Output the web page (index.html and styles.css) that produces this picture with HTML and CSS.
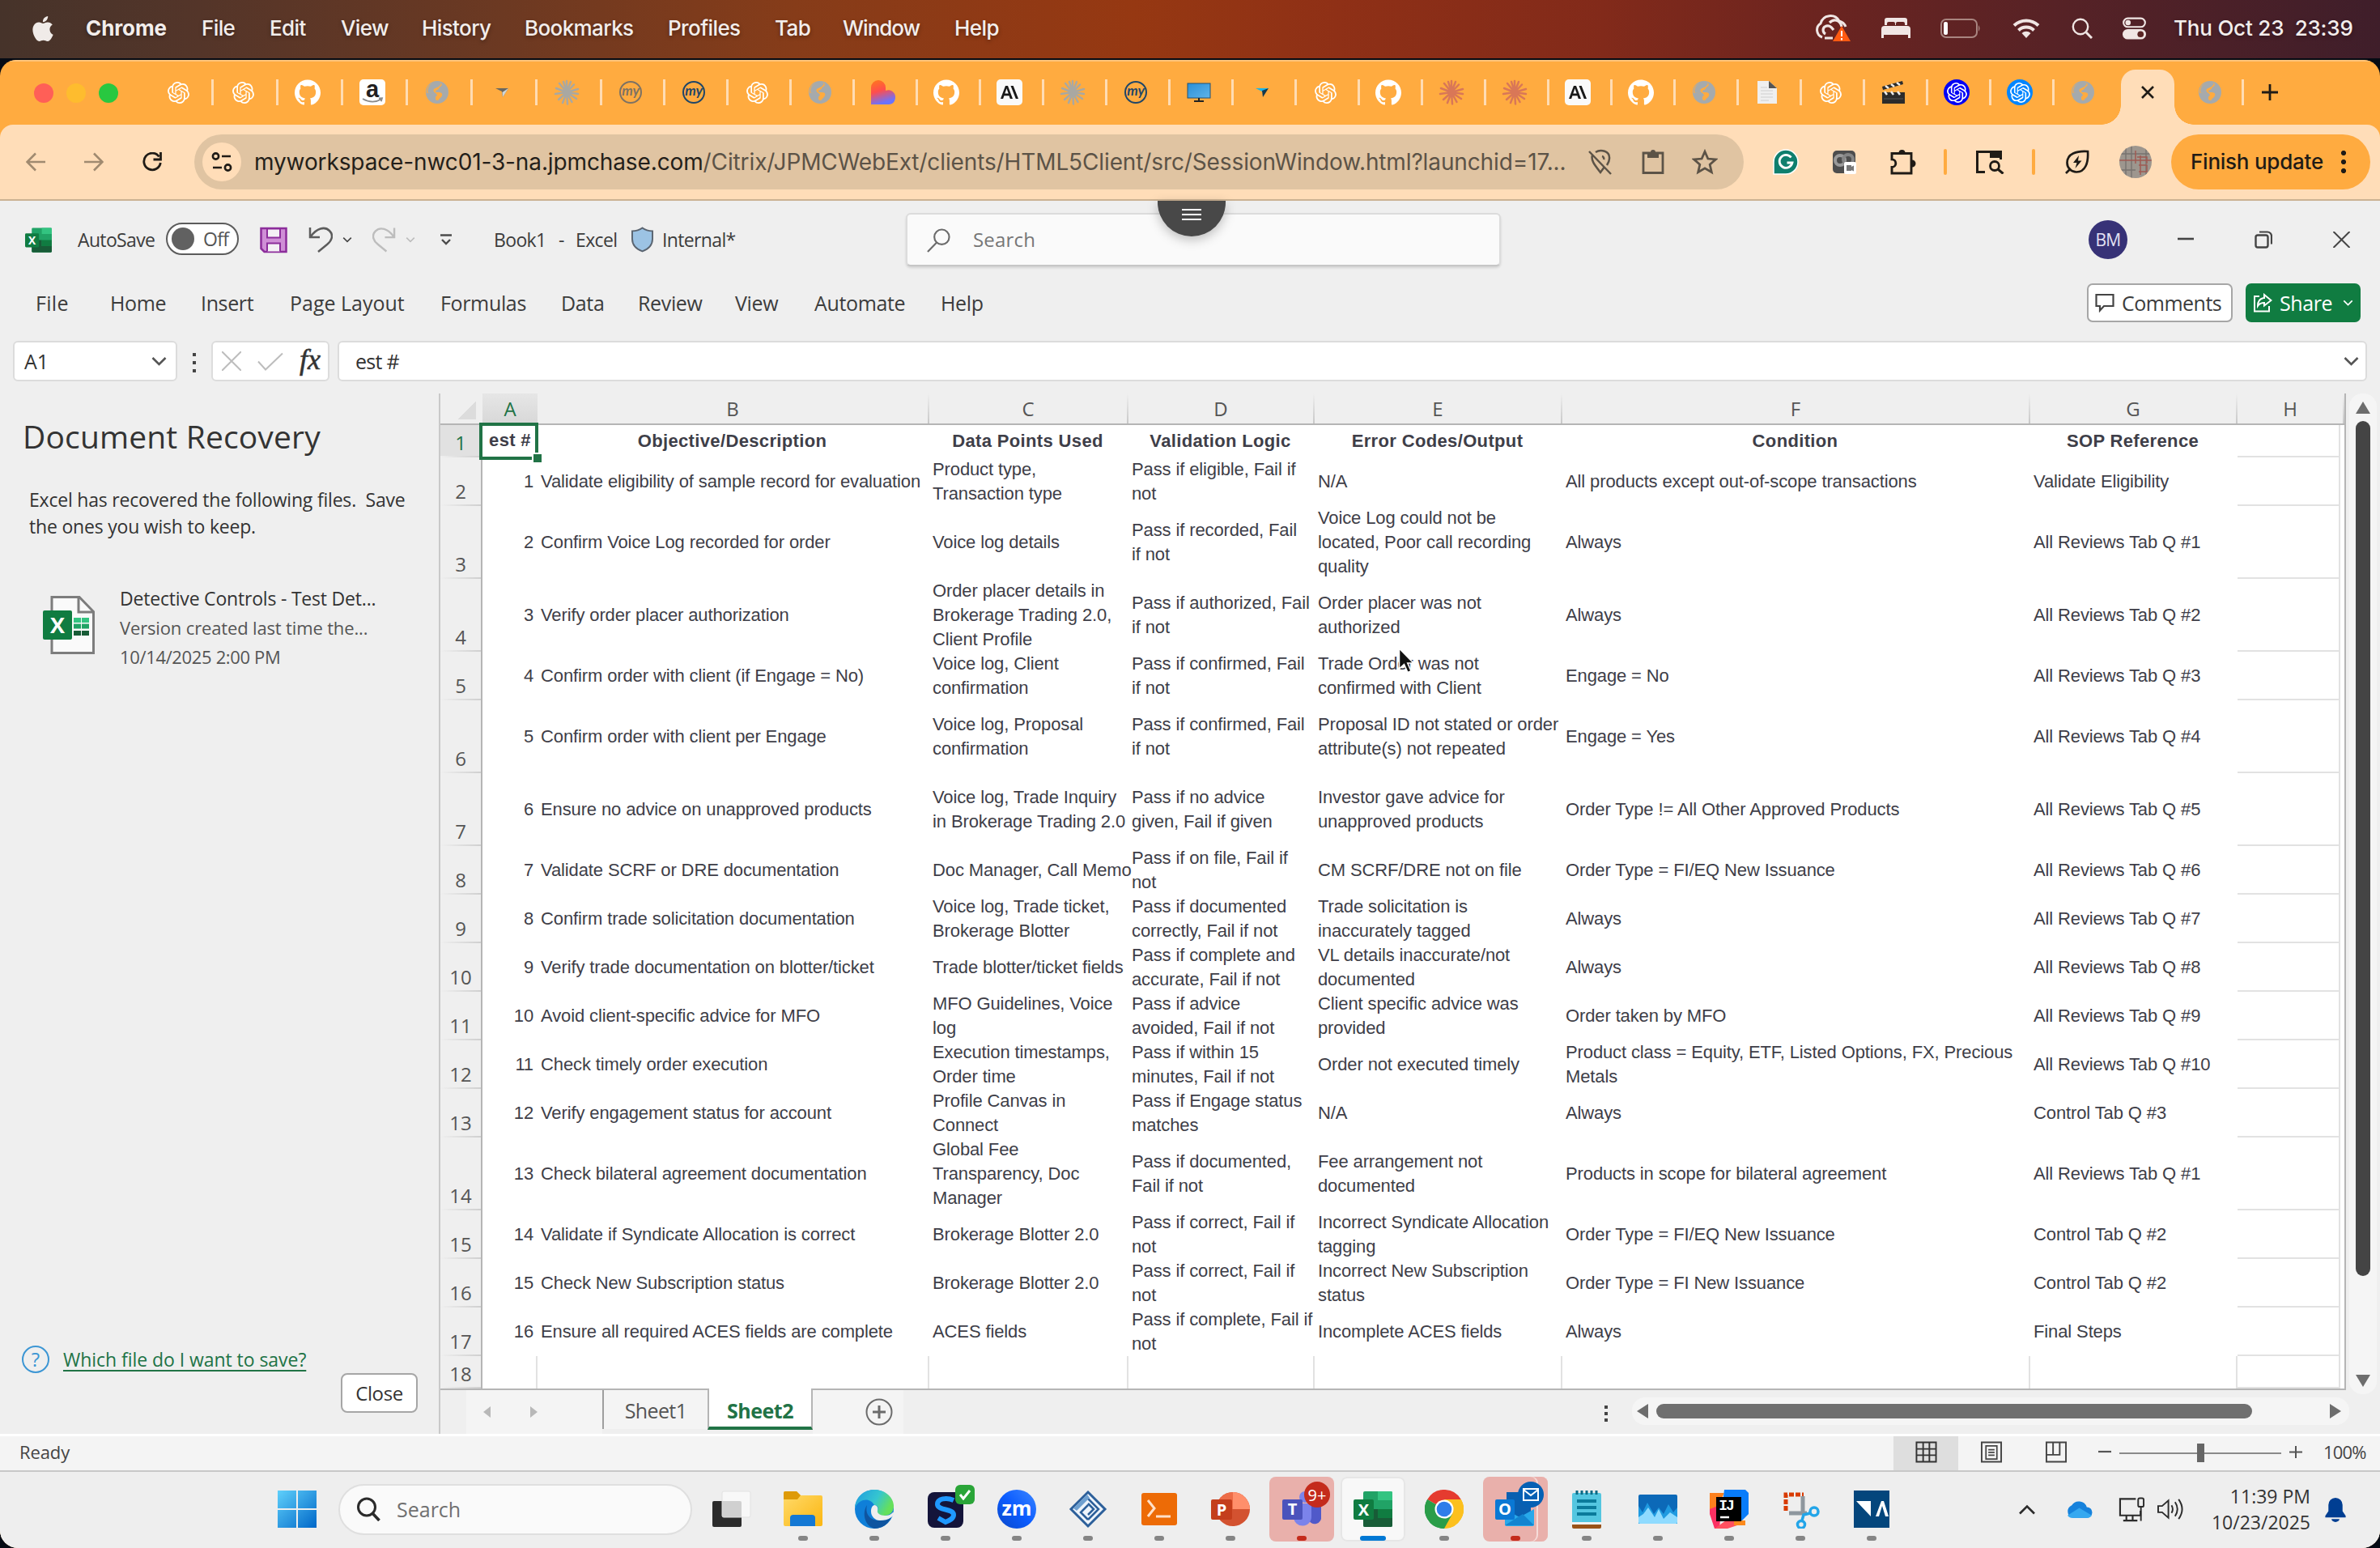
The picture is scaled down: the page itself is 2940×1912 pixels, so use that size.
FILE: index.html
```html
<!DOCTYPE html>
<html lang="en">
<head>
<meta charset="utf-8">
<title>Book1 - Excel</title>
<link rel="stylesheet" href="styles.css">
</head>
<body>
<svg class="defs" width="0" height="0">
  <defs>
    <linearGradient id="gLov" x1="0" y1="0" x2="0.3" y2="1"><stop offset="0" stop-color="#ff7a1a"/><stop offset=".5" stop-color="#ff4d4d"/><stop offset="1" stop-color="#6a73ff"/></linearGradient>
    <linearGradient id="gWin" x1="0" y1="0" x2="1" y2="1"><stop offset="0" stop-color="#5fd0fb"/><stop offset="1" stop-color="#0067c8"/></linearGradient>
    <linearGradient id="gEdge" x1="0" y1="0" x2="1" y2=".4"><stop offset="0" stop-color="#1e9be0"/><stop offset=".6" stop-color="#35c6d0"/><stop offset="1" stop-color="#66e05a"/></linearGradient>
    <linearGradient id="gFold" x1="0" y1="0" x2="1" y2="1"><stop offset="0" stop-color="#ffdc6e"/><stop offset="1" stop-color="#fbb612"/></linearGradient>
    <linearGradient id="gMon" x1="0" y1="0" x2="1" y2="1"><stop offset="0" stop-color="#2b8fd6"/><stop offset="1" stop-color="#5fb4ea"/></linearGradient>
    <linearGradient id="gZoom" x1="1" y1="0" x2="0" y2="1"><stop offset="0" stop-color="#3d87ff"/><stop offset=".5" stop-color="#0b5cff"/><stop offset="1" stop-color="#0a48c8"/></linearGradient>
  </defs>
  <symbol id="openai" viewBox="0 0 24 24"><path d="M22.2819 9.8211a5.9847 5.9847 0 0 0-.5157-4.9108 6.0462 6.0462 0 0 0-6.5098-2.9A6.0651 6.0651 0 0 0 4.9807 4.1818a5.9847 5.9847 0 0 0-3.9977 2.9 6.0462 6.0462 0 0 0 .7427 7.0966 5.98 5.98 0 0 0 .511 4.9107 6.051 6.051 0 0 0 6.5146 2.9001A5.9847 5.9847 0 0 0 13.2599 24a6.0557 6.0557 0 0 0 5.7718-4.2058 5.9894 5.9894 0 0 0 3.9977-2.9001 6.0557 6.0557 0 0 0-.7475-7.0729zm-9.022 12.6081a4.4755 4.4755 0 0 1-2.8764-1.0408l.1419-.0804 4.7783-2.7582a.7948.7948 0 0 0 .3927-.6813v-6.7369l2.02 1.1686a.071.071 0 0 1 .038.052v5.5826a4.504 4.504 0 0 1-4.4945 4.4944zm-9.6607-4.1254a4.4708 4.4708 0 0 1-.5346-3.0137l.142.0852 4.783 2.7582a.7712.7712 0 0 0 .7806 0l5.8428-3.3685v2.3324a.0804.0804 0 0 1-.0332.0615L9.74 19.9502a4.4992 4.4992 0 0 1-6.1408-1.6464zM2.3408 7.8956a4.485 4.485 0 0 1 2.3655-1.9728V11.6a.7664.7664 0 0 0 .3879.6765l5.8144 3.3543-2.0201 1.1685a.0757.0757 0 0 1-.071 0l-4.8303-2.7865A4.504 4.504 0 0 1 2.3408 7.872zm16.5963 3.8558L13.1038 8.364 15.1192 7.2a.0757.0757 0 0 1 .071 0l4.8303 2.7913a4.4944 4.4944 0 0 1-.6765 8.1042v-5.6772a.79.79 0 0 0-.407-.667zm2.0107-3.0231l-.142-.0852-4.7735-2.7818a.7759.7759 0 0 0-.7854 0L9.409 9.2297V6.8974a.0662.0662 0 0 1 .0284-.0615l4.8303-2.7866a4.4992 4.4992 0 0 1 6.6802 4.66zM8.3065 12.863l-2.02-1.1638a.0804.0804 0 0 1-.038-.0567V6.0742a4.4992 4.4992 0 0 1 7.3757-3.4537l-.142.0805L8.704 5.459a.7948.7948 0 0 0-.3927.6813zm1.0976-2.3654l2.602-1.4998 2.6069 1.4998v2.9994l-2.5974 1.4997-2.6067-1.4997Z" fill="currentColor"/></symbol>
  <symbol id="github" viewBox="0 0 24 24"><path fill="#fff" d="M12 .297c-6.63 0-12 5.373-12 12 0 5.303 3.438 9.8 8.205 11.385.6.113.82-.258.82-.577 0-.285-.01-1.04-.015-2.04-3.338.724-4.042-1.61-4.042-1.61C4.422 18.07 3.633 17.7 3.633 17.7c-1.087-.744.084-.729.084-.729 1.205.084 1.838 1.236 1.838 1.236 1.07 1.835 2.809 1.305 3.495.998.108-.776.417-1.305.76-1.605-2.665-.3-5.466-1.332-5.466-5.93 0-1.31.465-2.38 1.235-3.22-.135-.303-.54-1.523.105-3.176 0 0 1.005-.322 3.3 1.23.96-.267 1.98-.399 3-.405 1.02.006 2.04.138 3 .405 2.28-1.552 3.285-1.23 3.285-1.23.645 1.653.24 2.873.12 3.176.765.84 1.23 1.91 1.23 3.22 0 4.61-2.805 5.625-5.475 5.92.42.36.81 1.096.81 2.22 0 1.606-.015 2.896-.015 3.286 0 .315.21.69.825.57C20.565 22.092 24 17.592 24 12.297c0-6.627-5.373-12-12-12"/></symbol>
  <symbol id="globe" viewBox="0 0 32 32"><circle cx="16" cy="16" r="14" fill="#a5aaad"/><path d="M18 4c4 0 5 3 2 5s-1 3-4 4-3 3 1 3 6 1 5 4-3 3-4 5-4 1-4-1 1-3-1-5-7-3-10-2c0-6 2-10 7-12 3-1 5-1 8-1z" fill="#ffab40"/><path d="M20 4.500c-4-2-11-1-14 4-2 3-2 6-1.500 8 3 0 7 1 8 3 2 3 4 1 3-1s-4-2-4-5 5-3 7-5 1-2 2.500-2z" fill="#a5aaad"/></symbol>
  <symbol id="arrow-grey" viewBox="0 0 32 32"><path d="M8 11h16l-7 11-1-7z" fill="#6a675f"/><path d="M24 11l-7 11-.5-6z" fill="#cfd6d8"/></symbol>
  <symbol id="arrow-blue" viewBox="0 0 32 32"><path d="M8 11h16l-6 4-2 0z" fill="#19b5ea"/><path d="M16 14l8-3-7 11z" fill="#12384e"/></symbol>
  <symbol id="burst" viewBox="0 0 32 32"><path d="M16 16V2M16 16l5-13M16 16l9-9.500M16 16l14-4M16 16l14 2M16 16l12 8M16 16l6.500 12M16 16l1 14.500M16 16l-5 13M16 16l-10 9M16 16l-14 2M16 16l-13-5M16 16l-9-11M16 16l-4-13" stroke="currentColor" stroke-width="2.500" stroke-linecap="round"/></symbol>
  <symbol id="lov" viewBox="0 0 32 32"><path d="M1 31V10a9 9 0 0 1 18 0v4a8.500 8.500 0 0 1 12 8c0 5-3 9-8 9z" fill="url(#gLov)"/></symbol>
  <symbol id="ai" viewBox="0 0 32 32"><rect width="32" height="32" rx="5" fill="#fafafa"/><path d="M5 24l6-16h3l6 16h-3.200l-1.300-3.800H9.400L8.100 24zM10.300 17.500h4.400L12.500 11.300z M17.500 8h3.200l6.300 16h-3.200z" fill="#1a1a1a"/></symbol>
  <symbol id="monitor" viewBox="0 0 32 32"><rect x="2" y="5" width="28" height="18" fill="url(#gMon)" stroke="#24506f"/><path d="M16 23v4M10 27h12" stroke="#222" stroke-width="2"/></symbol>
  <symbol id="doc" viewBox="0 0 32 32"><path d="M4 2h14l10 9v19H4z" fill="#efefef"/><path d="M18 2v9h10z" fill="#555"/><path d="M8 10h8M8 14h15M8 18h15M8 22h15M8 26h10" stroke="#cfcfcf"/></symbol>
  <symbol id="clap" viewBox="0 0 32 32"><path d="M2 16h28v14H2z" fill="#2b2b2b"/><path d="M2 9l25-7 1 4L3 13z" fill="#2b2b2b"/><path d="M6 8l4 3M13 6l4 3M20 4l4 3M5 15l3 4M13 15l3 4M21 15l3 4" stroke="#eee" stroke-width="2.500"/><path d="M4 24h24" stroke="#555"/></symbol>
  <symbol id="chev" viewBox="0 0 20 12"><path d="M2 2l8 8 8-8" fill="none" stroke="currentColor" stroke-width="2.600"/></symbol>
</svg>

<header class="menubar">
  <svg class="apple" viewBox="0 0 24 24"><path fill="#f0ebe8" d="M12.152 6.896c-.948 0-2.415-1.078-3.96-1.040-2.040.027-3.910 1.183-4.961 3.014-2.117 3.675-.546 9.103 1.519 12.090 1.013 1.454 2.208 3.090 3.792 3.039 1.520-.065 2.090-.987 3.935-.987 1.831 0 2.350.987 3.960.948 1.637-.026 2.676-1.480 3.676-2.948 1.156-1.688 1.636-3.325 1.662-3.415-.039-.013-3.182-1.221-3.220-4.857-.026-3.040 2.480-4.494 2.597-4.559-1.429-2.090-3.623-2.324-4.390-2.376-2-.156-3.675 1.090-4.610 1.090zM15.530 3.830c.843-1.012 1.400-2.427 1.245-3.830-1.207.052-2.662.805-3.532 1.818-.780.896-1.454 2.338-1.273 3.714 1.338.104 2.715-.688 3.559-1.701"/></svg>
  <nav class="mac-menu">
    <b class="m1">Chrome</b><span class="m2">File</span><span class="m3">Edit</span><span class="m4">View</span><span class="m5">History</span><span class="m6">Bookmarks</span><span class="m7">Profiles</span><span class="m8">Tab</span><span class="m9">Window</span><span>Help</span>
  </nav>
  <div class="mac-status">
    <svg class="cc" viewBox="0 0 44 34"><path d="M9 28a9.500 9.500 0 0 1-2-17A12.500 12.500 0 0 1 30 8a12 12 0 0 1 8 7M12 29h10" fill="none" stroke="#f0e6e4" stroke-width="3"/><path d="M13 24a5.500 5.500 0 0 1-1-9c5-3 8 0 11 4M18 10c5-5 13-4 15 5" fill="none" stroke="#f0e6e4" stroke-width="3.200"/><path d="M33 14l11 19H22z" fill="#ff5a12"/><path d="M33 20v7M33 29v2.500" stroke="#fff" stroke-width="2"/></svg>
    <svg class="bed" viewBox="0 0 36 26"><path d="M4 9V3a3 3 0 0 1 3-3h22a3 3 0 0 1 3 3v6h-3V7a2 2 0 0 0-2-2h-7a2 2 0 0 0-2 2v2h-1V7a2 2 0 0 0-2-2H9a2 2 0 0 0-2 2v2zM0 25V14a4 4 0 0 1 4-4h28a4 4 0 0 1 4 4v11h-3v-4H3v4z" fill="#f0e6e4"/></svg>
    <svg class="batt" viewBox="0 0 50 24"><rect x="1" y="1" width="44" height="22" rx="6" fill="none" stroke="#a98580" stroke-width="2"/><rect x="4" y="4" width="5" height="16" rx="2" fill="#fff"/><path d="M47 8q3 4 0 8z" fill="#a98580"/></svg>
    <svg class="wifi" viewBox="0 0 34 26"><path d="M2 9.500a21.500 21.500 0 0 1 30 0M7.500 15.500a13.500 13.500 0 0 1 19 0" fill="none" stroke="#f0e6e4" stroke-width="4"/><path d="M17 25l-5.500-6a8 8 0 0 1 11 0z" fill="#f0e6e4"/></svg>
    <svg class="mag" viewBox="0 0 26 26"><circle cx="11" cy="11" r="9.200" fill="none" stroke="#f0e6e4" stroke-width="2.400"/><path d="M18 18l7 7" stroke="#f0e6e4" stroke-width="3"/></svg>
    <svg class="ctl" viewBox="0 0 30 28"><rect x="1.200" y="1.200" width="27.600" height="11" rx="5.500" fill="none" stroke="#f0e6e4" stroke-width="2.200"/><circle cx="7" cy="6.700" r="3.400" fill="#f0e6e4"/><rect x="0" y="15" width="30" height="13" rx="6.500" fill="#f0e6e4"/><circle cx="23" cy="21.500" r="4" fill="#5a2424"/></svg>
    <span class="clock">Thu Oct 23&nbsp; 23:39</span>
  </div>
</header>

<div class="browser">
  <div class="tabstrip">
    <div class="lights"><i class="red"></i><i class="yel"></i><i class="grn"></i></div>
    <div class="tab w"><svg class="oa"><use href="#openai"/></svg></div>
    <div class="tab w"><svg class="oa"><use href="#openai"/></svg></div>
    <div class="tab w"><svg><use href="#github"/></svg></div>
    <div class="tab w"><svg viewBox="0 0 32 32"><rect width="32" height="32" rx="5" fill="#fff"/><text class="amz" x="16" y="22" text-anchor="middle">a</text><path d="M4 24q12 7 23 .5M24 23.500l4-.3-1.200 4" fill="none" stroke="#8a8a8a" stroke-width="1.800"/></svg></div>
    <div class="tab w"><svg><use href="#globe"/></svg></div>
    <div class="tab w"><svg><use href="#arrow-grey"/></svg></div>
    <div class="tab w"><svg class="grey"><use href="#burst"/></svg></div>
    <div class="tab"><svg class="my mygrey" viewBox="0 0 32 32"><circle cx="16" cy="16" r="13"/><text x="16" y="20" text-anchor="middle">my</text></svg></div>
    <div class="tab"><svg class="my myblue" viewBox="0 0 32 32"><circle cx="16" cy="16" r="13"/><text x="16" y="20" text-anchor="middle">my</text></svg></div>
    <div class="tab"><svg class="oa"><use href="#openai"/></svg></div>
    <div class="tab"><svg><use href="#globe"/></svg></div>
    <div class="tab"><svg><use href="#lov"/></svg></div>
    <div class="tab"><svg><use href="#github"/></svg></div>
    <div class="tab"><svg><use href="#ai"/></svg></div>
    <div class="tab"><svg class="grey"><use href="#burst"/></svg></div>
    <div class="tab"><svg class="my myblue" viewBox="0 0 32 32"><circle cx="16" cy="16" r="13"/><text x="16" y="20" text-anchor="middle">my</text></svg></div>
    <div class="tab"><svg><use href="#monitor"/></svg></div>
    <div class="tab"><svg><use href="#arrow-blue"/></svg></div>
    <div class="tab"><svg class="oa"><use href="#openai"/></svg></div>
    <div class="tab"><svg><use href="#github"/></svg></div>
    <div class="tab"><svg class="clay"><use href="#burst"/></svg></div>
    <div class="tab"><svg class="clay"><use href="#burst"/></svg></div>
    <div class="tab"><svg><use href="#ai"/></svg></div>
    <div class="tab"><svg><use href="#github"/></svg></div>
    <div class="tab"><svg><use href="#globe"/></svg></div>
    <div class="tab"><svg><use href="#doc"/></svg></div>
    <div class="tab"><svg class="oa"><use href="#openai"/></svg></div>
    <div class="tab"><svg><use href="#clap"/></svg></div>
    <div class="tab"><span class="disc navy"><svg><use href="#openai"/></svg></span></div>
    <div class="tab"><span class="disc sky"><svg><use href="#openai"/></svg></span></div>
    <div class="tab nosep"><svg><use href="#globe"/></svg></div>
    <div class="tab-active"><svg viewBox="0 0 16 16"><path d="M1 1l14 14M15 1L1 15" stroke="#1f1b16" stroke-width="2.600"/></svg></div>
    <div class="tab last"><svg><use href="#globe"/></svg></div>
    <svg class="plus" viewBox="0 0 20 20"><path d="M10 0v20M0 10h20" stroke="#1f1b16" stroke-width="2.800"/></svg>
  </div>

  <div class="toolbar">
    <svg class="t-back" viewBox="0 0 24 24"><path d="M24 12H2M12 1.500L1.500 12 12 22.500" fill="none" stroke="#a08a70" stroke-width="2.600"/></svg>
    <svg class="t-fwd" viewBox="0 0 24 24"><path d="M0 12h22M12 1.500L22.500 12 12 22.500" fill="none" stroke="#a08a70" stroke-width="2.600"/></svg>
    <svg class="t-reload" viewBox="0 0 24 24"><path d="M20.500 5.500A10.300 10.300 0 1 0 22.300 13" fill="none" stroke="#1f1b16" stroke-width="2.800"/><path d="M22.500 0v9h-9" fill="none" stroke="#1f1b16" stroke-width="2.800"/></svg>
    <div class="omnibox">
      <span class="site"><svg viewBox="0 0 26 24"><g fill="none" stroke="#1f1b16" stroke-width="2.600"><circle cx="5.500" cy="5" r="3.600"/><path d="M13 5h11M2 19h11"/><circle cx="20.500" cy="19" r="3.600"/></g></svg></span>
      <span class="url"><span class="host">myworkspace-nwc01-3-na.jpmchase.com</span><span class="path">/Citrix/JPMCWebExt/clients/HTML5Client/src/SessionWindow.html?launchid=17...</span></span>
      <svg class="o-loc" viewBox="0 0 30 32"><g fill="none" stroke="#5c5347" stroke-width="2.500"><path d="M1 3l27 28M5 8c-2 6 3 12 10 21l5-7M9 4c6-4 18-2 17 8 0 3-1 5-3 8M17 9a3 3 0 0 1 2 4"/></g></svg>
      <svg class="o-clip" viewBox="0 0 30 32"><path d="M3 5h24v24.500H3z" fill="none" stroke="#5c5347" stroke-width="2.800"/><path d="M8 4h4a3 3 0 0 1 6 0h4v7H8z" fill="#5c5347"/></svg>
      <svg class="o-star" viewBox="0 0 30 30"><path d="M15 3l3.600 8.300 9 .8-6.800 6 2 8.800L15 22.300 7.200 26.900l2-8.800-6.800-6 9-.8z" fill="none" stroke="#5c5347" stroke-width="2.600"/></svg>
    </div>
    <svg class="e-gram" viewBox="0 0 32 32"><path d="M1 31V16A15 15 0 1 1 16 31z" fill="#0f7f6e" stroke="#fff" stroke-width="1.500"/><path d="M22.500 10.500A8 8 0 1 0 24 17h-6.500" fill="none" stroke="#fff" stroke-width="2.800"/></svg>
    <svg class="e-cam" viewBox="0 0 30 30"><rect x="1" y="1" width="28" height="28" rx="5" fill="#4d4d4d"/><circle cx="10" cy="13" r="6" fill="none" stroke="#9a9a9a" stroke-width="4"/><circle cx="20" cy="12" r="6" fill="none" stroke="#858585" stroke-width="4"/><rect x="15" y="15" width="15" height="15" rx="2" fill="#fff"/><path d="M18 19h6v2l3-1.500v7L24 25v1h-6z" fill="#777"/></svg>
    <svg class="e-puz" viewBox="0 0 32 32"><path d="M2 5.500h24V30H2v-7.500a4.800 4.800 0 0 0 0-9.600z" fill="none" stroke="#1f1b16" stroke-width="2.900"/><path d="M10.500 5a4 4 0 0 1 8 0zM27 13.500a4 4 0 0 1 0 9z" fill="#1f1b16"/></svg>
    <i class="vsep s1"></i>
    <svg class="e-srch" viewBox="0 0 36 30"><path d="M12 27.500H2.500v-25h29V12" fill="none" stroke="#1f1b16" stroke-width="3"/><path d="M18 2h14v8H18z" fill="#1f1b16"/><circle cx="24" cy="20" r="5.500" fill="none" stroke="#1f1b16" stroke-width="2.800"/><path d="M28 24l6.500 5.500" stroke="#1f1b16" stroke-width="3"/></svg>
    <i class="vsep s2"></i>
    <svg class="e-leaf" viewBox="0 0 30 30"><path d="M28 2C14 1 2.500 5 2.500 16a11.500 11.500 0 0 0 11.500 11.500C25 27.500 29 16 28 2zM1 29l6-6" fill="none" stroke="#1f1b16" stroke-width="2.700"/><path d="M17 7l-7 9h4.500l-2 7 8-9.500H16z" fill="#1f1b16"/></svg>
    <span class="avatar"><svg viewBox="0 0 40 40"><rect width="40" height="40" fill="#9d968e"/><path d="M8 0v40M33 0v40M0 30h20M0 10h40M15 0v40" stroke="#77736f" stroke-width="1.400"/><path d="M0 18h40M20 6v16M26 12v24M24 24h10v8H24M22 14h12v8" stroke="#a05a52" stroke-width="1.500" fill="none"/></svg></span>
    <span class="finish"><span>Finish update</span><i></i></span>
  </div>

  <main class="session">
    <button class="citrix" aria-label="Toolbar"><i></i><i></i><i></i></button>

    <div class="xl-title">
      <svg class="x-logo" viewBox="0 0 48 44"><rect x="12" y="0" width="36" height="44" rx="2" fill="#21a366"/><path d="M30 0h16a2 2 0 0 1 2 2v9H30z" fill="#33c481"/><path d="M12 22h18v11H12z" fill="#185c37"/><path d="M30 22h18v11H30z" fill="#107c41"/><path d="M12 33h36v9a2 2 0 0 1-2 2H14a2 2 0 0 1-2-2z" fill="#185c37"/><rect x="0" y="10" width="25" height="25" rx="2" fill="#107c41"/><text class="lt" x="12.500" y="30" text-anchor="middle">X</text></svg>
      <span class="x-auto">AutoSave</span>
      <span class="toggle"><i></i>Off</span>
      <svg class="x-save" viewBox="0 0 34 32"><path d="M1.500 1.500h31v29h-27l-4-4z" fill="#cf8fd6" stroke="#8c2d9b" stroke-width="2.500"/><path d="M9 2h16v11H9z" fill="#f4f0f5" stroke="#8c2d9b" stroke-width="2"/><path d="M9 30V20h16v10" fill="#f4f0f5" stroke="#8c2d9b" stroke-width="2"/></svg>
      <svg class="x-undo" viewBox="0 0 30 32"><path d="M2 1v12h12M3 12C10 2 20-1 26 5s2 13-3 17l-11 9" fill="none" stroke="#5c5c5c" stroke-width="2.500"/></svg>
      <svg class="x-c1"><use href="#chev"/></svg>
      <svg class="x-redo" viewBox="0 0 30 32"><path d="M28 1v12H16M27 12C20 2 10-1 4 5s-2 13 3 17l11 9" fill="none" stroke="#bdbdbd" stroke-width="2.500"/></svg>
      <svg class="x-c2"><use href="#chev"/></svg>
      <svg class="x-cust" viewBox="0 0 16 14"><path d="M1 1.500h14M3 7l5 5 5-5" fill="none" stroke="#4c4c4c" stroke-width="2.400"/></svg>
      <span class="x-doc"><span>Book1</span><span>-</span><span>Excel</span></span>
      <svg class="x-shield" viewBox="0 0 28 32"><path d="M14 1c4 3 8 4 13 4v10c0 8-5 13-13 16C6 28 1 23 1 15V5c5 0 9-1 13-4z" fill="#9cc3e4" stroke="#5a6470" stroke-width="2"/></svg>
      <span class="x-int">Internal*</span>
      <div class="x-search"><svg viewBox="0 0 30 32"><circle cx="19" cy="12" r="9.500" fill="none" stroke="#6b6b6b" stroke-width="2.200"/><path d="M12.500 19L1 31" stroke="#6b6b6b" stroke-width="2.200"/></svg><span>Search</span></div>
      <span class="x-bm">BM</span>
      <svg class="x-min" viewBox="0 0 20 20"><path d="M0 9h20" stroke="#444" stroke-width="2.600"/></svg>
      <svg class="x-res" viewBox="0 0 22 22"><rect x="1.500" y="5.500" width="15" height="15" rx="2.500" fill="none" stroke="#444" stroke-width="2.400"/><path d="M6 1.500h10a5 5 0 0 1 5 5v10" fill="none" stroke="#444" stroke-width="2.200"/></svg>
      <svg class="x-cls" viewBox="0 0 20 20"><path d="M0 0l20 20M20 0L0 20" stroke="#444" stroke-width="2"/></svg>
    </div>

    <div class="ribbon">
      <span class="r1">File</span><span class="r2">Home</span><span class="r3">Insert</span><span class="r4">Page Layout</span><span class="r5">Formulas</span><span class="r6">Data</span><span class="r7">Review</span><span class="r8">View</span><span class="r9">Automate</span><span class="r10">Help</span>
      <span class="btn-comments"><svg viewBox="0 0 24 24"><path d="M1.500 2h21v14H11l-5 5.500V16H1.500z" fill="none" stroke="#444" stroke-width="2.200"/></svg><span>Comments</span></span>
      <span class="btn-share"><svg viewBox="0 0 24 24"><path d="M8 4H2v18.500h18V16" fill="none" stroke="#fff" stroke-width="2"/><path d="M14 2l8.500 7L14 15.500V12c-4 0-6 1-8 4 0-6 3-9.500 8-10z" fill="none" stroke="#fff" stroke-width="2"/></svg><span>Share</span><svg class="sc"><use href="#chev"/></svg></span>
    </div>

    <div class="formula">
      <span class="namebox"><span>A1</span><svg><use href="#chev"/></svg></span>
      <span class="vdots"><i></i><i></i><i></i></span>
      <span class="fxbox"><svg class="fx-x" viewBox="0 0 24 24"><path d="M0 0l24 24M24 0L0 24" stroke="#bdbdbd" stroke-width="2"/></svg><svg class="fx-v" viewBox="0 0 32 22"><path d="M1 11l9 10L31 1" fill="none" stroke="#bdbdbd" stroke-width="2"/></svg><em>fx</em></span>
      <span class="fbar"><span>est #</span><svg><use href="#chev"/></svg></span>
    </div>

    <div class="work">
      <aside class="pane">
        <h1>Document Recovery</h1>
        <p>Excel has recovered the following files.&nbsp; Save<br>the ones you wish to keep.</p>
        <div class="rec">
          <svg viewBox="0 0 64 72"><path d="M11 1.500h34l17.500 18V70.500H11z" fill="#fafafa" stroke="#7d7d7d" stroke-width="3"/><path d="M44 2v18h18" fill="none" stroke="#7d7d7d" stroke-width="3"/><rect x="0" y="18" width="36" height="36" rx="2" fill="#107c41"/><path d="M38 27h9v6h-9zM48 27h9v6h-9z" fill="#33c481"/><path d="M38 34.500h9v6h-9zM48 34.500h9v6h-9z" fill="#21a366"/><path d="M38 43h9v6h-9zM48 43h9v6h-9z" fill="#185c37"/><text x="18" y="46" text-anchor="middle" font-family="Open Sans, sans-serif" font-weight="700" font-size="27" fill="#fff">X</text></svg>
          <div><span class="d1">Detective Controls - Test Det...</span><span class="d2">Version created last time the...</span><span class="d3">10/14/2025 2:00 PM</span></div>
        </div>
        <div class="which"><span class="q">?</span><a>Which file do I want to save?</a></div>
        <span class="close">Close</span>
      </aside>

      <section class="book">
        <div class="gridwrap">
          <div class="sheet">
            <div class="row head"><span class="corner"></span><span class="sel">A</span><span>B</span><span>C</span><span>D</span><span>E</span><span>F</span><span>G</span><span>H</span></div>
            <div class="row h40 titles"><b class="n on">1</b><span class="a1">est #</span><span>Objective/Description</span><span>Data Points Used</span><span>Validation Logic</span><span>Error Codes/Output</span><span>Condition</span><span>SOP Reference</span><i></i></div>
            <div class="row h60"><b class="n">2</b><span>1</span><span>Validate eligibility of sample record for evaluation</span><span>Product type,<br>Transaction type</span><span>Pass if eligible, Fail if<br>not</span><span>N/A</span><span>All products except out-of-scope transactions</span><span>Validate Eligibility</span><i></i></div>
            <div class="row h90"><b class="n">3</b><span>2</span><span>Confirm Voice Log recorded for order</span><span>Voice log details</span><span>Pass if recorded, Fail<br>if not</span><span>Voice Log could not be<br>located, Poor call recording<br>quality</span><span>Always</span><span>All Reviews Tab Q #1</span><i></i></div>
            <div class="row h90"><b class="n">4</b><span>3</span><span>Verify order placer authorization</span><span>Order placer details in<br>Brokerage Trading 2.0,<br>Client Profile</span><span>Pass if authorized, Fail<br>if not</span><span>Order placer was not<br>authorized</span><span>Always</span><span>All Reviews Tab Q #2</span><i></i></div>
            <div class="row h60"><b class="n">5</b><span>4</span><span>Confirm order with client (if Engage = No)</span><span>Voice log, Client<br>confirmation</span><span>Pass if confirmed, Fail<br>if not</span><span>Trade Order was not<br>confirmed with Client</span><span>Engage = No</span><span>All Reviews Tab Q #3</span><i></i></div>
            <div class="row h90"><b class="n">6</b><span>5</span><span>Confirm order with client per Engage</span><span>Voice log, Proposal<br>confirmation</span><span>Pass if confirmed, Fail<br>if not</span><span>Proposal ID not stated or order<br>attribute(s) not repeated</span><span>Engage = Yes</span><span>All Reviews Tab Q #4</span><i></i></div>
            <div class="row h90"><b class="n">7</b><span>6</span><span>Ensure no advice on unapproved products</span><span>Voice log, Trade Inquiry<br>in Brokerage Trading 2.0</span><span>Pass if no advice<br>given, Fail if given</span><span>Investor gave advice for<br>unapproved products</span><span>Order Type != All Other Approved Products</span><span>All Reviews Tab Q #5</span><i></i></div>
            <div class="row h60"><b class="n">8</b><span>7</span><span>Validate SCRF or DRE documentation</span><span>Doc Manager, Call Memo</span><span>Pass if on file, Fail if<br>not</span><span>CM SCRF/DRE not on file</span><span>Order Type = FI/EQ New Issuance</span><span>All Reviews Tab Q #6</span><i></i></div>
            <div class="row h60"><b class="n">9</b><span>8</span><span>Confirm trade solicitation documentation</span><span>Voice log, Trade ticket,<br>Brokerage Blotter</span><span>Pass if documented<br>correctly, Fail if not</span><span>Trade solicitation is<br>inaccurately tagged</span><span>Always</span><span>All Reviews Tab Q #7</span><i></i></div>
            <div class="row h60"><b class="n">10</b><span>9</span><span>Verify trade documentation on blotter/ticket</span><span>Trade blotter/ticket fields</span><span>Pass if complete and<br>accurate, Fail if not</span><span>VL details inaccurate/not<br>documented</span><span>Always</span><span>All Reviews Tab Q #8</span><i></i></div>
            <div class="row h60"><b class="n">11</b><span>10</span><span>Avoid client-specific advice for MFO</span><span>MFO Guidelines, Voice<br>log</span><span>Pass if advice<br>avoided, Fail if not</span><span>Client specific advice was<br>provided</span><span>Order taken by MFO</span><span>All Reviews Tab Q #9</span><i></i></div>
            <div class="row h60"><b class="n">12</b><span>11</span><span>Check timely order execution</span><span>Execution timestamps,<br>Order time</span><span>Pass if within 15<br>minutes, Fail if not</span><span>Order not executed timely</span><span>Product class = Equity, ETF, Listed Options, FX, Precious<br>Metals</span><span>All Reviews Tab Q #10</span><i></i></div>
            <div class="row h60"><b class="n">13</b><span>12</span><span>Verify engagement status for account</span><span>Profile Canvas in<br>Connect</span><span>Pass if Engage status<br>matches</span><span>N/A</span><span>Always</span><span>Control Tab Q #3</span><i></i></div>
            <div class="row h90"><b class="n">14</b><span>13</span><span>Check bilateral agreement documentation</span><span>Global Fee<br>Transparency, Doc<br>Manager</span><span>Pass if documented,<br>Fail if not</span><span>Fee arrangement not<br>documented</span><span>Products in scope for bilateral agreement</span><span>All Reviews Tab Q #1</span><i></i></div>
            <div class="row h60"><b class="n">15</b><span>14</span><span>Validate if Syndicate Allocation is correct</span><span>Brokerage Blotter 2.0</span><span>Pass if correct, Fail if<br>not</span><span>Incorrect Syndicate Allocation<br>tagging</span><span>Order Type = FI/EQ New Issuance</span><span>Control Tab Q #2</span><i></i></div>
            <div class="row h60"><b class="n">16</b><span>15</span><span>Check New Subscription status</span><span>Brokerage Blotter 2.0</span><span>Pass if correct, Fail if<br>not</span><span>Incorrect New Subscription<br>status</span><span>Order Type = FI New Issuance</span><span>Control Tab Q #2</span><i></i></div>
            <div class="row h60"><b class="n">17</b><span>16</span><span>Ensure all required ACES fields are complete</span><span>ACES fields</span><span>Pass if complete, Fail if<br>not</span><span>Incomplete ACES fields</span><span>Always</span><span>Final Steps</span><i></i></div>
            <div class="row h41 blank"><b class="n">18</b><span></span><span></span><span></span><span></span><span></span><span></span><span></span><i></i></div>
          </div>
          <div class="vscroll"><i class="up"></i><i class="thumb"></i><i class="down"></i></div>
        </div>
        <div class="tabs">
          <div class="navs"><i class="l"></i><i class="r"></i></div>
          <span class="s-one">Sheet1</span><span class="s-two">Sheet2</span>
          <div class="adds"><svg viewBox="0 0 34 34"><circle cx="17" cy="17" r="15.500" fill="none" stroke="#6b6b6b" stroke-width="2"/><path d="M17 9v16M9 17h16" stroke="#6b6b6b" stroke-width="3"/></svg></div>
          <span class="vdots tb"><i></i><i></i><i></i></span>
          <div class="hscroll"><i class="l"></i><i class="thumb"></i><i class="r"></i></div>
        </div>
      </section>
    </div>

    <div class="statusbar">
      <span class="ready">Ready</span>
      <span class="v1"><svg viewBox="0 0 28 28"><path d="M1.500 1.500h25v25h-25zM10 1v26M18 1v26M1 10h26M1 18h26" fill="none" stroke="#333" stroke-width="2"/></svg></span>
      <svg class="v2" viewBox="0 0 28 28"><path d="M1.500 1.500h25v25h-25z" fill="none" stroke="#444" stroke-width="2"/><path d="M7 6h14v17H7zM10 11h8M10 14.500h8M10 18h8" fill="none" stroke="#444" stroke-width="1.800"/></svg>
      <svg class="v3" viewBox="0 0 28 28"><path d="M1.500 1.500h25v25h-25zM1.500 17.500h17V1.500M10 1.500v16" fill="none" stroke="#444" stroke-width="2"/></svg>
      <svg class="z-m" viewBox="0 0 16 16"><path d="M0 7h16" stroke="#555" stroke-width="2.200"/></svg>
      <span class="slider"><i></i></span>
      <svg class="z-p" viewBox="0 0 16 16"><path d="M0 7.500h16M8 0v15" stroke="#555" stroke-width="2"/></svg>
      <span class="zoom">100%</span>
    </div>

    <footer class="taskbar">
      <svg class="win" viewBox="0 0 48 46"><path d="M0 0h23v22H0zM25 0h23v22H25zM0 24h23v22H0zM25 24h23v22H25z" fill="url(#gWin)"/></svg>
      <div class="tsearch"><svg viewBox="0 0 30 30"><circle cx="13" cy="12.500" r="10.500" fill="none" stroke="#2b2b2b" stroke-width="3"/><path d="M20.500 20.500L28.500 29" stroke="#2b2b2b" stroke-width="3.600"/></svg><span>Search</span></div>
      <div class="apps">
        <div class="app nodot"><svg viewBox="0 0 48 46"><rect x="0" y="13" width="36" height="32" rx="2" fill="#2b2b2b"/><rect x="12" y="1" width="35" height="32" rx="2" fill="#fafafa" fill-opacity=".8" stroke="#e2e2e2"/></svg></div>
        <div class="app"><svg viewBox="0 0 48 46"><path d="M0 3a2 2 0 0 1 2-2h14l5 5h25a2 2 0 0 1 2 2v34a2 2 0 0 1-2 2H2a2 2 0 0 1-2-2z" fill="url(#gFold)"/><path d="M0 3a2 2 0 0 1 2-2h14l5 5-4 5H0z" fill="#de9a08"/><path d="M8 44V34a4 4 0 0 1 4-4h23a4 4 0 0 1 4 4v10z" fill="#1478d4"/></svg></div>
        <div class="app"><svg viewBox="0 0 48 48"><circle cx="24" cy="24" r="24" fill="#0f7fd8"/><path d="M0 22C1 9 11 0 24 0c14 0 24 10 24 20 0 8-5 12-12 12-5 0-9-2-9-5 3-3 2-8-3-8C19 10 7 10 0 22z" fill="url(#gEdge)"/><path d="M15 19c-3 12 5 19 15 19 7 0 11-2 15-4-4 9-12 14-21 14-11-3-16-18-9-29z" fill="#0f55a0"/><path d="M24 19c4 0 5 4 4 7s4 6 9 6c4 0 7-1 10-4l1 0c0 3-1 5-3 6-4 3-9 4-14 4-6 0-11-5-11-11 0-4 1-7 4-8z" fill="#eee"/></svg></div>
        <div class="app"><svg viewBox="0 0 48 48"><rect x="2" y="3" width="44" height="44" rx="8" fill="#14143a"/><path d="M34 13c-9-4-20-2-20 5 0 8 20 5 20 13 0 5-5 7-10 9l-9-5" fill="none" stroke="#1f98ff" stroke-width="6"/></svg><span class="chk"><svg viewBox="0 0 16 14"><path d="M2 7l4 5 8-10" fill="none" stroke="#fff" stroke-width="3"/></svg></span></div>
        <div class="app"><svg viewBox="0 0 48 48"><circle cx="24" cy="24" r="24" fill="url(#gZoom)"/><text x="24" y="32" text-anchor="middle" font-family="Open Sans, sans-serif" font-weight="700" font-size="25" textLength="37" lengthAdjust="spacingAndGlyphs" fill="#fff">zm</text></svg></div>
        <div class="app"><svg viewBox="0 0 48 48"><g fill="none" stroke="#2c5f9a" stroke-width="3"><path d="M24 3l21 21-21 21L3 24z" fill="#eef4fb"/><path d="M24 11l13 13-13 13M24 17l7 7-7 7M24 37L15 28l9-9" stroke-width="2.500"/></g><path d="M6 23L23 6l3 4L10 26z" fill="#6fa0d0"/></svg></div>
        <div class="app"><svg viewBox="0 0 48 48"><rect x="2" y="4" width="44" height="40" rx="3" fill="#ed6b06"/><path d="M10 13l8 10-8 10M20 33h18" fill="none" stroke="#ffe0c8" stroke-width="3"/></svg></div>
        <div class="app"><svg viewBox="0 0 48 48"><circle cx="27" cy="24" r="21" fill="#d35230"/><path d="M27 3a21 21 0 0 1 21 21H27z" fill="#ff8f6b"/><path d="M27 3v21H6A21 21 0 0 1 27 3z" fill="#ed6c47"/><rect x="0" y="12" width="26" height="25" rx="2" fill="#c43e1c"/><text class="lt" x="13" y="32" text-anchor="middle">P</text></svg></div>
        <div class="app alert"><svg viewBox="0 0 48 48"><path d="M32 18h16v14a8 8 0 0 1-16 4z" fill="#5059c9"/><circle cx="28" cy="9" r="7" fill="#7b83eb"/><path d="M14 17h22v16a11 11 0 0 1-22 1z" fill="#7b83eb"/><rect x="0" y="12" width="25" height="25" rx="2" fill="#4b53bc"/><text class="lt" x="12.500" y="31" text-anchor="middle">T</text></svg><span class="bub red">9+</span></div>
        <div class="app current"><svg viewBox="0 0 48 44"><rect x="12" y="0" width="36" height="44" rx="2" fill="#21a366"/><path d="M30 0h16a2 2 0 0 1 2 2v9H30z" fill="#33c481"/><path d="M12 22h18v11H12z" fill="#185c37"/><path d="M30 22h18v11H30z" fill="#107c41"/><path d="M12 33h36v9a2 2 0 0 1-2 2H14a2 2 0 0 1-2-2z" fill="#185c37"/><rect x="0" y="10" width="25" height="25" rx="2" fill="#107c41"/><text class="lt" x="12.500" y="30" text-anchor="middle">X</text></svg></div>
        <div class="app"><svg viewBox="0 0 48 48"><path d="M24 24L3.200 12A24 24 0 0 1 44.800 12z" fill="#e53b2f"/><path d="M24 24L44.800 12A24 24 0 0 1 24 48z" fill="#fcc01e"/><path d="M24 24v24A24 24 0 0 1 3.200 12z" fill="#2a9d49"/><path d="M24 12h20.800A24 24 0 0 1 24 48l10-18z" fill="#fcc01e"/><path d="M13.600 30L3.200 12 24 30l10 0L24 48A24 24 0 0 1 3.200 12z" fill="#2a9d49"/><circle cx="24" cy="24" r="11.500" fill="#fff"/><circle cx="24" cy="24" r="9.300" fill="#2f7de9"/></svg></div>
        <div class="app alert ol"><svg viewBox="0 0 48 48"><rect x="14" y="3" width="30" height="30" fill="#0a5fb0"/><path d="M12 24l18 10 18-10v19a2 2 0 0 1-2 2H14a2 2 0 0 1-2-2z" fill="#28a8ea"/><path d="M12 44l22-14 14 14z" fill="#1284d0"/><rect x="0" y="12" width="24" height="25" rx="2" fill="#0a78d4"/><text class="lt" x="12" y="31" text-anchor="middle">O</text></svg><span class="bub blue"><svg viewBox="0 0 20 16"><path d="M1 1h18v14H1zM1 2l9 7 9-7" fill="none" stroke="#fff" stroke-width="2"/></svg></span></div>
        <div class="app"><svg viewBox="0 0 48 48"><rect x="6" y="4" width="36" height="40" rx="2" fill="#54c6e0"/><path d="M6 42h36v4a2 2 0 0 1-2 2H8a2 2 0 0 1-2-2z" fill="#9a5218"/><path d="M6 40h36v3H6z" fill="#f2f2f2"/><path d="M12 1v5M18 1v5M24 1v5M30 1v5M36 1v5" stroke="#0b6a86" stroke-width="3"/><path d="M12 14h24M12 22h24M12 30h24" stroke="#0b7b9b" stroke-width="4"/></svg></div>
        <div class="app"><svg viewBox="0 0 48 48"><rect x="0" y="6" width="48" height="36" rx="2" fill="#0c69b8"/><path d="M0 20l5 8 6-12 8 14 6-8 6 8 6-12 6 10 5-6v20H0z" fill="#1f9ae0"/><path d="M0 34l6-4 6-8 8 12 5-10 6 12 8-8 9 6v6a2 2 0 0 1-2 2H2a2 2 0 0 1-2-2z" fill="#8fdbff"/></svg></div>
        <div class="app"><svg viewBox="0 0 48 48"><path d="M0 4h16l-4 44H6L0 30z" fill="#fc3063"/><path d="M0 4h18L10 20 0 24z" fill="#fc801d"/><path d="M18 0h26l4 4v26l-12 12-20-26z" fill="#087cfa"/><path d="M20 38h24v6l-10 0-12 4H6z" fill="#ff5060"/><path d="M30 38h14v6H30z" fill="#fc8a1d"/><rect x="8" y="9" width="31" height="30" fill="#000"/><text x="20" y="25" text-anchor="middle" font-family="Liberation Mono, monospace" font-weight="700" font-size="18" letter-spacing="-2" fill="#fff">IJ</text><path d="M13 34h11" stroke="#fff" stroke-width="2.500"/></svg></div>
        <div class="app"><svg viewBox="0 0 48 48"><path d="M6 26V6h22" fill="none" stroke="#d83b01" stroke-width="5" stroke-dasharray="6 2"/><path d="M27 8v22M10 29h22" stroke="#8e979e" stroke-width="5"/><circle cx="41" cy="27" r="5" fill="none" stroke="#23a5e8" stroke-width="3.500"/><circle cx="25" cy="43" r="4.500" fill="none" stroke="#23a5e8" stroke-width="3.500"/><path d="M36 29l-8 2-2 7" fill="none" stroke="#23a5e8" stroke-width="3.500"/></svg></div>
        <div class="app"><svg viewBox="0 0 48 48"><rect x="2" y="1" width="44" height="46" fill="#04467c"/><path d="M5 14h18v19zM29 33l7-19h3l6 19h-4l-4-13-4 13z" fill="#fff"/></svg></div>
      </div>
      <svg class="y-up" viewBox="0 0 20 12"><path d="M1 11l9-9 9 9" fill="none" stroke="#2b2b2b" stroke-width="2.600"/></svg>
      <svg class="y-cloud" viewBox="0 0 32 22"><path d="M8 21a8 8 0 0 1-1-15A10 10 0 0 1 25 8a6.500 6.500 0 0 1 0 13z" fill="#1682dc"/><path d="M2 18l14-9 15 9c-1 2-3 3-6 3H8c-3 0-5-1-6-3z" fill="#35a8f0"/></svg>
      <svg class="y-net" viewBox="0 0 34 32"><path d="M22 3H2v21h26V18M10 24v6M18 24v6M6 30.500h18" fill="none" stroke="#2b2b2b" stroke-width="2.200"/><rect x="25" y="2" width="7" height="11" rx="2" fill="none" stroke="#2b2b2b" stroke-width="2"/><path d="M28.500 13v18" stroke="#2b2b2b" stroke-width="2"/></svg>
      <svg class="y-vol" viewBox="0 0 34 28"><path d="M1 10h5l8-7v22l-8-7H1zM18 9q3 5 0 10M22.500 5q6 9 0 18M27 1.500q9 12.500 0 25" fill="none" stroke="#2b2b2b" stroke-width="2"/></svg>
      <span class="dt"><span>11:39 PM</span><span>10/23/2025</span></span>
      <svg class="y-bell" viewBox="0 0 26 32"><path d="M0 24l4-6V10a9 9 0 0 1 18 0v8l4 6v2H0zM8 28h10a5 4 0 0 1-10 0z" fill="#003e92"/></svg>
    </footer>
    <svg class="cursor" viewBox="0 0 20 32"><path d="M1.500 1v25l6-5.500 4.500 10 4-1.700-4.300-9.800h7.300z" fill="#111" stroke="#fff" stroke-width="1.500"/></svg>
  </main>
</div>
</body>
</html>
```
FILE: styles.css
```css
*, *::before, *::after { box-sizing: border-box; }
body { margin: 0; width: 2940px; height: 1912px; overflow: hidden; background: #050b14; font-family: "Open Sans", sans-serif; color: #333; }
svg { display: block; flex: none; }
i { display: block; flex: none; }
.defs { position: absolute; }
.lt { font: 700 20px "Open Sans", sans-serif; letter-spacing: 0; fill: #fff; }

/* macOS menu bar */
.menubar { height: 72px; display: flex; align-items: center; background: linear-gradient(90deg, #46332a 0, #543529 250px, #6c3922 620px, #863c19 980px, #963812 1400px, #8f3016 1650px, #822a1a 1980px, #6b2420 2250px, #562226 2550px, #3f1e2a 2940px); font: 500 26px/32px Inter, sans-serif; letter-spacing: -.6px; color: #f3eeec; padding-bottom: 2px; text-shadow: 0 2px 5px rgba(0,0,0,.35); }
.apple { width: 34px; height: 31px; margin-left: 36px; }
.mac-menu { display: flex; margin-left: 36px; white-space: nowrap; }
.mac-menu > * { display: block; }
.m1 { width: 143px; font-weight: 700; letter-spacing: -.1px; } .m2 { width: 84px; } .m3 { width: 88px; } .m4 { width: 100px; } .m5 { width: 127px; } .m6 { width: 177px; } .m7 { width: 132px; } .m8 { width: 84px; } .m9 { width: 138px; letter-spacing: -1px; }
.mac-status { display: flex; align-items: center; margin-left: auto; padding-right: 33px; }
.cc { width: 44px; height: 34px; margin-right: 38px; } .bed { width: 36px; height: 26px; margin-right: 37px; } .batt { width: 50px; height: 24px; margin-right: 39px; } .wifi { width: 34px; height: 26px; margin-right: 39px; } .mag { width: 26px; height: 26px; margin-right: 37px; } .ctl { width: 29px; height: 28px; margin-right: 34px; }
.clock { width: 222px; white-space: nowrap; letter-spacing: -.2px; }

/* browser */
.browser { margin-top: 2px; height: 1838px; border-radius: 20px 20px 22px 22px; overflow: hidden; background: #ffab40; }
.tabstrip { height: 80px; display: flex; align-items: center; box-shadow: inset 0 2px 0 #ffc47a; }
.lights { display: flex; gap: 16px; width: 184px; padding-left: 42px; padding-top: 2px; }
.lights i { width: 24px; height: 24px; border-radius: 50%; }
.red { background: #ff5f57; } .yel { background: #febc2e; } .grn { background: #28c840; }
.tab { width: 78px; height: 32px; padding-left: 19px; display: flex; justify-content: space-between; align-items: center; border-right: 3px solid #ffdcb3; flex: none; }
.tab.w { width: 80px; padding-left: 20px; }
.tab.nosep { border: 0; }
.tab svg { width: 32px; height: 32px; }
.tab svg.oa { width: 27px; height: 27px; margin-left: 3px; color: #fff; }
.grey { color: #a9a8a2; } .clay { color: #d97757; } .mygrey { color: #7d7264; } .myblue { color: #1f4668; }
.amz { font: 700 29px "Liberation Sans", sans-serif; fill: #221f1f; }
.my circle { fill: none; stroke: currentColor; stroke-width: 2; }
.my text { font: italic 700 17px Lato, sans-serif; fill: currentColor; }
.disc { width: 32px; height: 32px; border-radius: 50%; display: flex; align-items: center; justify-content: center; color: #fff; }
.tab .disc svg { width: 25px; height: 25px; }
.navy { background: #0000f5; } .sky { background: #0285ff; }
.tab-active { position: relative; width: 66px; height: 68px; margin: 12px 0 0 4px; background: #ffddb8; border-radius: 18px 18px 0 0; display: flex; justify-content: center; padding-top: 20px; }
.tab-active svg { width: 16px; height: 16px; }
.tab-active::before, .tab-active::after { content: ""; position: absolute; bottom: 0; width: 24px; height: 24px; }
.tab-active::before { left: -24px; background: radial-gradient(circle at 0 0, transparent 23.5px, #ffddb8 24px); }
.tab-active::after { right: -24px; background: radial-gradient(circle at 100% 0, transparent 23.5px, #ffddb8 24px); }
.tab.last { width: 86px; padding-left: 28px; }
.plus { width: 20px; height: 20px; margin-left: 22px; }

.toolbar { height: 94px; background: #ffddb8; border-bottom: 2px solid #cbb293; border-radius: 16px 16px 0 0; display: flex; align-items: center; color: #1f1b16; }
.t-back { width: 24px; height: 24px; margin-left: 32px; } .t-fwd { width: 24px; height: 24px; margin-left: 48px; } .t-reload { width: 24px; height: 24px; margin-left: 48px; }
.omnibox { width: 1914px; height: 68px; margin-left: 40px; border-radius: 34px; background: #e0c4a2; display: flex; align-items: center; padding-left: 10px; flex: none; }
.site { width: 48px; height: 48px; border-radius: 50%; background: #ffddb8; display: flex; align-items: center; justify-content: center; }
.site svg { width: 26px; height: 24px; }
.url { font: 400 28px/40px Inter, sans-serif; letter-spacing: -.12px; margin-left: 16px; width: 1648px; white-space: nowrap; color: #5c5347; }
.host { color: #241f1a; }
.o-loc { width: 30px; height: 32px; } .o-clip { width: 30px; height: 32px; margin-left: 35px; } .o-star { width: 32px; height: 32px; margin-left: 33px; }
.e-gram { width: 32px; height: 32px; margin-left: 36px; } .e-cam { width: 30px; height: 30px; margin-left: 41px; } .e-puz { width: 32px; height: 32px; margin-left: 42px; }
.vsep { width: 4px; height: 32px; border-radius: 2px; background: #ffab40; }
.s1 { margin-left: 34px; } .e-srch { width: 36px; height: 30px; margin-left: 35px; } .s2 { margin-left: 34px; } .e-leaf { width: 30px; height: 30px; margin-left: 37px; }
.avatar { width: 40px; height: 40px; border-radius: 50%; overflow: hidden; margin-left: 37px; }
.finish { width: 246px; height: 68px; border-radius: 34px; background: #ffab40; margin-left: 24px; display: flex; align-items: center; padding-left: 24px; font: 500 26px/32px Inter, sans-serif; letter-spacing: -.24px; white-space: nowrap; }
.finish > span { width: 186px; }
.finish i { width: 6px; height: 28px; background: radial-gradient(circle at 3px 3px, #1f1b16 2.800px, transparent 3.200px) 0 0/6px 11px; }

/* remote session */
.session { position: relative; height: 1664px; background: #efefef; display: flex; flex-direction: column; font-size: 25px; line-height: 34px; white-space: nowrap; }
.citrix { position: absolute; left: 1430px; top: 0; width: 84px; height: 44px; padding: 10px 0 0; border: 0; border-radius: 0 0 42px 42px; background: #484848; display: flex; flex-direction: column; align-items: center; gap: 4px; box-shadow: 0 4px 14px rgba(0,0,0,.25); z-index: 2; }
.citrix i { width: 24px; height: 2px; background: #fff; }

.xl-title { height: 96px; display: flex; align-items: center; color: #3c3c3c; font-size: 23px; letter-spacing: -.65px; }
.x-logo { width: 33px; height: 33px; margin-left: 31px; }
.x-auto { width: 109px; margin-left: 32px; }
.toggle { width: 90px; height: 40px; border: 2px solid #5c5c5c; border-radius: 20px; background: #fff; display: flex; align-items: center; gap: 11px; padding-left: 5px; margin-top: -3px; color: #555; }
.toggle i { width: 28px; height: 28px; border-radius: 50%; background: #616161; }
.x-save { width: 34px; height: 33px; margin-left: 26px; } .x-undo { width: 30px; height: 32px; margin-left: 26px; } .x-c1 { width: 12px; height: 8px; margin-left: 12px; color: #444; } .x-redo { width: 29px; height: 32px; margin-left: 25px; } .x-c2 { width: 12px; height: 8px; margin-left: 12px; color: #bdbdbd; } .x-cust { width: 16px; height: 14px; margin-left: 30px; }
.x-doc { width: 170px; margin-left: 51px; display: flex; } .x-doc span:nth-child(1) { width: 80px; } .x-doc span:nth-child(2) { width: 21px; }
.x-shield { width: 27px; height: 32px; } .x-int { width: 301px; margin-left: 11px; }
.x-search { width: 735px; height: 66px; border: 2px solid #dcdcdc; border-bottom-color: #c6c6c6; border-radius: 6px; background: #fafafa; display: flex; align-items: center; gap: 28px; padding-left: 24px; color: #767676; box-shadow: 0 2px 3px rgba(0,0,0,.12); font-size: 24px; letter-spacing: .2px; }
.x-search svg { width: 29px; height: 31px; }
.x-bm { width: 48px; height: 48px; border-radius: 50%; background: #373277; color: #e4e2f4; font-size: 21px; line-height: 48px; text-align: center; margin-left: 726px; }
.x-min { width: 20px; height: 20px; margin-left: 62px; } .x-res { width: 22px; height: 22px; margin-left: 75px; } .x-cls { width: 21px; height: 20px; margin-left: 75px; }

.ribbon { height: 62px; display: flex; align-items: center; padding: 0 0 2px 44px; color: #3c3c3c; letter-spacing: -.35px; }
.r1 { width: 92px; letter-spacing: .3px; } .r2 { width: 112px; } .r3 { width: 110px; } .r4 { width: 186px; letter-spacing: 0; } .r5 { width: 149px; } .r6 { width: 95px; } .r7 { width: 120px; } .r8 { width: 98px; } .r9 { width: 156px; } .r10 { width: 1416px; }
.btn-comments { width: 180px; height: 48px; border: 2px solid #a6a6a6; border-radius: 7px; background: #fff; display: flex; align-items: center; padding-left: 8px; gap: 9px; letter-spacing: -.5px; }
.btn-comments svg, .btn-share svg { width: 24px; height: 24px; }
.btn-share { width: 142px; height: 48px; margin-left: 16px; border-radius: 7px; background: #107c41; color: #fff; display: flex; align-items: center; padding-left: 9px; gap: 9px; letter-spacing: -.4px; }
.btn-share .sc { width: 13px; height: 8px; margin-left: 4px; }

.formula { height: 80px; display: flex; padding: 15px 0 0 16px; }
.namebox, .fxbox, .fbar { height: 50px; background: #fff; border: 2px solid #dcdcdc; border-radius: 6px; display: flex; align-items: center; }
.namebox { width: 203px; justify-content: space-between; padding: 0 10px 0 12px; }
.namebox svg, .fbar svg { width: 21px; height: 12px; color: #555; }
.vdots { width: 42px; display: flex; flex-direction: column; align-items: center; gap: 6px; padding-top: 15px; }
.vdots i { width: 4px; height: 4px; background: #444; }
.fxbox { width: 146px; padding-left: 11px; }
.fx-x { width: 24px; height: 24px; } .fx-v { width: 32px; height: 23px; margin-left: 20px; }
.fxbox em { font: italic 400 36px/40px "Liberation Serif", serif; color: #333; -webkit-text-stroke: .6px #333; margin: -4px 0 0 20px; letter-spacing: 0; }
.fbar { width: 2507px; margin-left: 10px; justify-content: space-between; padding: 0 7px 0 20px; letter-spacing: -.7px; }

.work { flex: none; height: 1285px; display: flex; }
.pane { width: 544px; border-right: 2px solid #c9c9c9; display: flex; flex-direction: column; font-size: 24px; color: #333; }
.pane h1 { margin: 25px 0 0 28px; font-weight: 400; font-size: 39px; line-height: 56px; letter-spacing: .15px; color: #333; }
.pane p { margin: 34px 0 0 36px; line-height: 32.500px; font-size: 23px; letter-spacing: -.2px; }
.rec { display: flex; margin: 55px 0 0 53px; }
.rec > svg { width: 64px; height: 72px; margin-top: 15px; }
.rec > div { display: flex; flex-direction: column; line-height: 36.200px; margin-left: 31px; }
.d1 { font-size: 23px; letter-spacing: -.2px; }
.d2, .d3 { color: #555; font-size: 22px; letter-spacing: -.15px; }
.d3 { letter-spacing: -.35px; }
.which { display: flex; align-items: center; margin: auto 0 0 27px; height: 34px; }
.q { width: 34px; height: 34px; border: 2px solid #3c96d4; border-radius: 50%; color: #3c96d4; text-align: center; line-height: 29px; }
.which a { margin-left: 17px; font-size: 23px; letter-spacing: -.05px; color: #217346; text-decoration: underline; text-underline-offset: 4px; }
.close { width: 95px; height: 49px; border: 2px solid #a6a6a6; border-radius: 8px; background: #fff; text-align: center; line-height: 45px; letter-spacing: -.4px; margin: 0 0 26px 421px; }

.book { width: 2396px; display: flex; flex-direction: column; }
.gridwrap { height: 1231px; display: flex; }
.sheet { width: 2354px; border-right: 2px solid #b5b5b5; border-bottom: 2px solid #b5b5b5; background: #fff; }
.row { display: grid; grid-template-columns: 52px 68px 484px 246px 230px 306px 578px 256px 132px; font: 400 22px/30px "Liberation Sans", sans-serif; letter-spacing: -.12px; color: #3e3e48; }
.h40 { height: 40px; } .h60 { height: 60px; } .h90 { height: 90px; } .h41 { height: 40px; }
.row > span { padding-left: 4px; align-self: center; }
.row > span:nth-child(2) { text-align: right; padding-right: 5px; }
.head { height: 39px; background: #efefef; border-bottom: 2px solid #b5b5b5; font: 400 24px/37px "Open Sans", sans-serif; color: #555; letter-spacing: 0; }
.row.head > span { align-self: stretch; text-align: center; padding: 0 2px 0 0; background: linear-gradient(#efefef, #c8c8c8) right/2px 100% no-repeat; }
.row.head > span.corner { background: linear-gradient(135deg, transparent 50%, #dcdcdc 50%) 22px 9px/22px 23px no-repeat; }
.row.head > span.sel { background: linear-gradient(#e6e6e6, #d8d8d8); color: #217346; padding: 0; }
.n { font: 400 24px/30px "Open Sans", sans-serif; letter-spacing: 0; color: #555; background: linear-gradient(90deg, #efefef, #cfcfcf) bottom/100% 2px no-repeat #efefef; border-right: 2px solid #b5b5b5; display: flex; align-items: flex-end; justify-content: center; padding-bottom: 3px; }
.n.on { background-color: #e1e1e1; color: #217346; }
.row i { border-bottom: 2px solid #e2e2e2; border-right: 2px solid #e2e2e2; margin-right: 5px; box-shadow: 5px 0 0 #fff; }
.row.titles > span { font-weight: 700; font-size: 22px; text-align: center; padding: 0 3px 0 0; letter-spacing: .35px; }
.row.titles > .a1 { position: relative; align-self: stretch; line-height: 38px; padding: 0; }
.a1::before { content: ""; position: absolute; left: -4px; top: -3px; width: 73px; height: 46px; border: 4px solid #217346; }
.a1::after { content: ""; position: absolute; left: 61px; top: 34px; width: 12px; height: 12px; background: #217346; border: 2px solid #fff; border-width: 2px 0 0 2px; }
.blank > span { align-self: stretch; border-right: 2px solid #e2e2e2; }
.vscroll { width: 34px; margin-left: 4px; background: #f5f5f5; border-radius: 16px; height: 1236px; display: flex; flex-direction: column; align-items: center; }
.up { margin-top: 10px; border: 9px solid transparent; border-bottom: 15px solid #6d6d6d; border-top: 0; }
.vscroll .thumb { width: 18px; height: 1056px; margin-top: 9px; border-radius: 9px; background: #444; }
.down { margin-top: 122px; border: 9px solid transparent; border-top: 15px solid #6d6d6d; border-bottom: 0; }

.tabs { height: 54px; display: flex; color: #555; }
.navs { width: 168px; margin-left: 32px; background: #f4f4f4; display: flex; padding: 20px 0 0 21px; gap: 49px; }
.navs i { border: 7px solid transparent; width: 0; height: 0; }
.navs .l { border-right: 9px solid #b8b8b8; border-left: 0; } .navs .r { border-left: 9px solid #b8b8b8; border-right: 0; }
.s-one { width: 130px; height: 48px; border-left: 2px solid #9e9e9e; background: #f4f4f4; text-align: center; line-height: 51px; letter-spacing: -.6px; }
.s-two { width: 130px; height: 51px; margin-top: -2px; background: #fff; border-bottom: 4px solid #217346; border-left: 2px solid #b5b5b5; border-right: 2px solid #b5b5b5; text-align: center; color: #217346; font-weight: 700; line-height: 54px; letter-spacing: -.5px; }
.adds { width: 112px; background: #f4f4f4; padding: 10px 0 0 65px; }
.adds svg { width: 34px; height: 34px; }
.tb { width: 8px; margin-left: 864px; padding-top: 19px; gap: 4px; }
.hscroll { width: 886px; height: 34px; margin: 9px 0 0 28px; background: #f5f5f5; border-radius: 16px; display: flex; align-items: center; }
.hscroll .l { margin-left: 6px; border: 9px solid transparent; border-right: 14px solid #6d6d6d; border-left: 0; }
.hscroll .thumb { width: 736px; height: 18px; border-radius: 9px; background: #6f6f6f; margin-left: 10px; }
.hscroll .r { margin-left: 96px; border: 9px solid transparent; border-left: 14px solid #6d6d6d; border-right: 0; }

.statusbar { height: 47px; background: #f4f4f4; border-top: 3px solid #fff; border-bottom: 2px solid #c8c8c8; display: flex; align-items: center; font-size: 22px; color: #444; }
.ready { width: 2315px; margin: 0 0 4px 24px; letter-spacing: -.1px; }
.v1 { width: 80px; height: 42px; background: #dedede; display: flex; align-items: center; justify-content: center; padding-bottom: 4px; }
.v1 svg { width: 27px; height: 27px; }
.v2 { width: 28px; height: 27px; margin: 0 0 4px 27px; } .v3 { width: 28px; height: 27px; margin: 0 0 4px 52px; }
.z-m { width: 16px; height: 16px; margin-left: 38px; margin-bottom: 3px; }
.slider { width: 200px; height: 2px; background: #8a8a8a; margin-left: 10px; position: relative; }
.slider i { position: absolute; left: 96px; top: -11px; width: 9px; height: 23px; background: #666; }
.z-p { width: 16px; height: 16px; margin: 0 0 3px 10px; } .zoom { margin: 0 0 4px 26px; letter-spacing: -.8px; }

.taskbar { height: 94px; background: #eee; display: flex; align-items: center; padding-bottom: 2px; }
.win { width: 48px; height: 46px; margin-left: 343px; }
.tsearch { width: 437px; height: 63px; border-radius: 32px; border: 2px solid #dfdfdf; background: #fafafa; margin-left: 27px; display: flex; align-items: center; gap: 20px; padding-left: 20px; color: #707070; font-size: 25px; letter-spacing: 0; }
.tsearch svg { width: 30px; height: 30px; }
.apps { display: flex; margin-left: 5px; }
.app { position: relative; width: 80px; height: 80px; margin: 0 4px; border-radius: 8px; display: flex; align-items: center; justify-content: center; }
.app > svg { width: 48px; height: 48px; }
.app::after { content: ""; position: absolute; bottom: 1px; left: 34px; width: 12px; height: 6px; border-radius: 3px; background: #858585; }
.nodot::after { display: none; }
.alert { background: #e9b0ab; } .alert::after { background: #c42b1c; }
.ol { box-shadow: inset -12px 0 0 #e9b0ab, inset -14px 0 0 #f5dcd9; }
.ol > svg { margin-right: 2px; }
.current { background: #f8f8f8; box-shadow: inset 0 0 0 2px #e6e6e6; } .current::after { left: 24px; width: 32px; background: #0078d4; }
.chk { position: absolute; right: 4px; top: 10px; width: 24px; height: 24px; border-radius: 6px; background: #2aa538; display: flex; align-items: center; justify-content: center; }
.app .chk svg { width: 16px; height: 14px; }
.bub { position: absolute; right: 5px; top: 6px; width: 32px; height: 32px; border-radius: 50%; color: #fff; font-size: 20px; line-height: 31px; display: flex; align-items: center; justify-content: center; }
.bub.red { background: #c42b1c; } .bub.blue { background: #0560b4; } .app .bub svg { width: 20px; height: 16px; }
.y-up { width: 20px; height: 13px; margin-left: 138px; } .y-cloud { width: 33px; height: 23px; margin-left: 38px; } .y-net { width: 33px; height: 32px; margin-left: 32px; } .y-vol { width: 33px; height: 28px; margin-left: 15px; }
.dt { width: 156px; text-align: right; font-size: 23px; line-height: 32px; display: flex; flex-direction: column; color: #333; }
.y-bell { width: 26px; height: 31px; margin-left: 18px; }
.cursor { position: absolute; left: 1727px; top: 552px; width: 20px; height: 32px; z-index: 3; }
```
